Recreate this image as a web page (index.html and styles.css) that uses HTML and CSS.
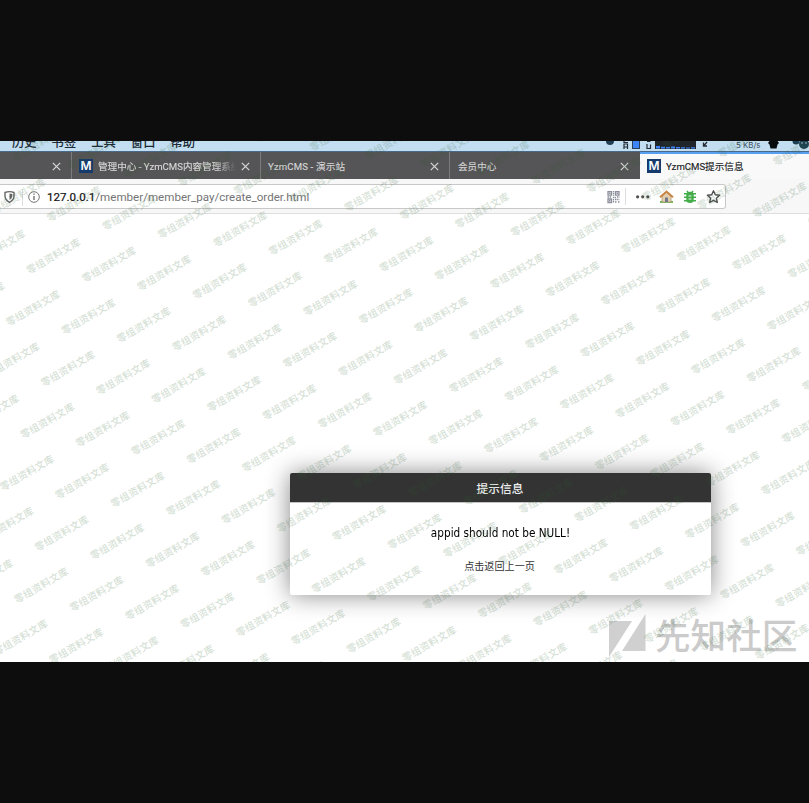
FILE: index.html
```html
<!DOCTYPE html>
<html lang="zh">
<head>
<meta charset="utf-8">
<title>YzmCMS提示信息</title>
<link rel="stylesheet" href="styles.css">
</head>
<body>
<main class="screen">
  <div class="menubar">
    <nav class="menus"><span>历史</span><span>书签</span><span>工具</span><span>窗口</span><span>帮助</span></nav>
    <svg class="tray" width="209" height="10" viewBox="600 141 209 10">
      <circle cx="610" cy="141" r="4" fill="#203f55"/>
      <path d="M624 141v1.500h4M624 149v-5h3.500v5M624 147h3.500" fill="none" stroke="#222b33" stroke-width="1.200"/>
      <rect x="632.500" y="139" width="7" height="9.500" fill="#3d84f7" stroke="#29405c"/>
      <path d="M647 141.500h3.500M647 144v4.500h3.500v-4" fill="none" stroke="#222b33" stroke-width="1.200"/>
      <rect x="655" y="139" width="41" height="10" fill="#20252a"/>
      <path d="M656 146h4v2.500h-4zM661 146.800h4v1.700h-4zM666 147h4v1.500h-4zM671 146.500h4v2h-4zM676 147h4v1.500h-4zM681 147.300h4v1.200h-4zM686 147.500h4v1h-4zM691 147.300h4v1.200h-4z" fill="#3d84f7"/>
      <path d="M707 142l-3 3.500M703.500 142.500v3.500h3.500" fill="none" stroke="#222b33" stroke-width="1.300"/>
      <path d="M769.500 141h8l1.500 2-1.500 1.500-1 4h-6l-1-4-1.500-1.500z" fill="#080b0e"/>
      <circle cx="796" cy="141" r="3.500" fill="#1d4154"/><circle cx="804" cy="144" r="5" fill="#1d4154"/>
      <circle cx="802" cy="143" r=".8" fill="#b7d2e2"/><circle cx="806" cy="143" r=".8" fill="#b7d2e2"/>
    </svg>
    <span class="speed">5 KB/s</span>
  </div>
  <div class="tabs">
    <div class="tab first"><svg class="close" viewBox="0 0 9 9"><path d="M.8.8l7.400 7.400M8.200.8L.8 8.200"/></svg></div>
    <div class="tab second"><span class="fav">M</span><span class="label fade">管理中心 - YzmCMS内容管理系统</span><svg class="close" viewBox="0 0 9 9"><path d="M.8.8l7.400 7.400M8.200.8L.8 8.200"/></svg></div>
    <div class="tab third"><span class="label">YzmCMS - 演示站</span><svg class="close" viewBox="0 0 9 9"><path d="M.8.8l7.400 7.400M8.200.8L.8 8.200"/></svg></div>
    <div class="tab fourth"><span class="label">会员中心</span><svg class="close" viewBox="0 0 9 9"><path d="M.8.8l7.400 7.400M8.200.8L.8 8.200"/></svg></div>
    <div class="tab active"><span class="fav">M</span><span class="label">YzmCMS提示信息</span></div>
  </div>
  <div class="toolbar">
    <div class="urlbar">
      <svg class="lead" width="42" height="22" viewBox="0 186 42 22" fill="none">
        <path d="M5 192.500q4.500-1.800 9 0v3.500q0 4-4.500 6.300Q5 200 5 196z" stroke="#666" stroke-width="1.400"/>
        <path d="M9.500 193.500v6.500q2.800-1.500 2.800-4.300v-1.700z" fill="#666"/>
        <path d="M22.500 189v17" stroke="#ddd"/>
        <circle cx="34" cy="197" r="5.300" stroke="#777"/>
        <path d="M34 196v4M34 193.500v1.200" stroke="#666" stroke-width="1.300"/>
      </svg>
      <span class="url"><b>127.0.0.1</b>/member/member_pay/create_order.html</span>
      <svg class="actions" width="120" height="22" viewBox="602 186 120 22" fill="none">
        <g stroke="#8b8f9b" stroke-width="1.300">
          <path d="M608 191.600h3.500v3.500H608zM615.500 191.600h3.500v3.500h-3.500zM608 199h3.500v3.500H608z"/>
          <path d="M613.500 191v5M607.500 197h4M613 197.500h3M617 197h2.500M613.500 199v3.500M615 199.500h4.500M615 202h1.500M618 202h1.500" stroke-dasharray="1.500 .6"/>
        </g>
        <path d="M609 192.600h1.500v1.500H609zM616.500 192.600h1.500v1.500h-1.500zM609 200h1.500v1.500H609z" fill="#8b8f9b"/>
        <path d="M625.500 188v17" stroke="#ddd"/>
        <g fill="#505050"><circle cx="637.600" cy="196.800" r="1.600"/><circle cx="642.700" cy="196.800" r="1.600"/><circle cx="647.800" cy="196.800" r="1.600"/></g>
        <path d="M660 201h13v1.800h-13z" fill="#62b445"/>
        <path d="M662 196.500l4.500-4 4.500 4v5.500h-9z" fill="#e2cfb0" stroke="#a88967" stroke-width=".7"/>
        <path d="M660 197.300l6.500-5.800 6.500 5.800" stroke="#c98543" stroke-width="2"/>
        <path d="M665 197.500h3v4.500h-3z" fill="#747989"/>
        <g stroke="#43ad49" stroke-width="1.500"><path d="M684 193.800h12M684 197.300h12M684 200.800h12M687 191l1.500 2M693 191l-1.500 2"/></g>
        <path d="M686.300 195q0-3.300 3.700-3.300t3.700 3.300v4.500q0 3.500-3.700 3.500t-3.700-3.500z" fill="#43ad49"/>
        <path d="M688.500 196h3M688.500 199h3" stroke="#e7f5e7" stroke-width="1.100"/>
        <path d="M713.500 190.800l1.800 4 4.300.5-3.200 2.900.9 4.300-3.800-2.200-3.800 2.200.9-4.300-3.200-2.900 4.300-.5z" stroke="#505050" stroke-width="1.400" stroke-linejoin="round"/>
      </svg>
    </div>
  </div>
  <div class="page">
    <section class="dialog">
      <h1>提示信息</h1>
      <p class="message">appid should not be NULL!</p>
      <p class="back">点击返回上一页</p>
    </section>
  </div>
  <div class="brand">
    <svg width="38" height="44" viewBox="0 0 38 44"><path d="M0 7h23L0 43zM36.500 0v37H13z" fill="#d0d0d0"/></svg>
    <span>先知社区</span>
  </div>
  <svg class="watermarks" id="watermarks" width="809" height="521" viewBox="0 141 809 521"></svg>
</main>
<script src="watermarks.js"></script>
</body>
</html>
```
FILE: styles.css
```css
* { box-sizing: border-box; }
body {
  margin: 0;
  height: 803px;
  padding-top: 141px;
  overflow: hidden;
  background: #0d0d0d;
  font-family: Roboto, "Noto Sans CJK SC", sans-serif;
}
.screen {
  position: relative;
  width: 809px;
  height: 521px;
  overflow: hidden;
  background: #fff;
}
.menubar {
  position: relative;
  display: flex;
  justify-content: space-between;
  height: 11px;
  overflow: hidden;
  background: #c3def0;
  border-bottom: 1px solid #49698a;
}
.menus {
  display: flex;
  gap: 15px;
  margin: -7px 0 0 12px;
  font: 500 12.3px/17px "Noto Sans CJK SC", sans-serif;
  color: #1c2a35;
}
.tray { flex: none; }
.speed {
  position: absolute;
  left: 736px;
  top: 0;
  font: 7.9px/9px Inter, sans-serif;
  color: #3c4e5c;
}
.tabs { display: flex; height: 27px; background: #555456; }
.tab {
  display: flex;
  align-items: center;
  padding: 1px 10px 0 8px;
  border-right: 1px solid #7b7a7c;
  font-size: 9.6px;
  color: #d6d6d6;
}
.tab .label { -webkit-text-stroke: .15px currentColor; }
.first { width: 72px; }
.second { width: 189px; padding-left: 7px; }
.third { width: 189px; padding-left: 7px; }
.third .label { letter-spacing: .16px; }
.fourth { width: 190px; border-right: 0; padding-right: 11px; }
.active {
  width: 169px;
  padding: 0 0 1px 7px;
  border-top: 2px solid #57a0f1;
  border-right: 0;
  background: #f9f9fa;
  color: #202124;
}
.label { white-space: nowrap; }
.fade {
  width: 138px;
  overflow: hidden;
  -webkit-mask-image: linear-gradient(to right, #000 118px, transparent 138px);
  mask-image: linear-gradient(to right, #000 118px, transparent 138px);
}
.fav {
  flex: none;
  width: 14px;
  height: 14px;
  margin-right: 5px;
  background: #173a6d;
  color: #fff;
  font: 600 12px/14px Inter, sans-serif;
  text-align: center;
}
.close {
  width: 9px;
  height: 9px;
  margin-left: auto;
  stroke: #d8d8d8;
  stroke-width: 1.2;
  fill: none;
}
.toolbar {
  height: 35px;
  padding-top: 5px;
  border-bottom: 1px solid #dedede;
  background: #f7f7f8;
}
.urlbar {
  display: flex;
  align-items: center;
  width: 726px;
  height: 25px;
  border: 1px solid #c8c8c8;
  border-left: 0;
  border-radius: 0 3px 3px 0;
  background: #fff;
}
.lead, .actions { flex: none; }
.url {
  margin-left: 5px;
  font-size: 11.6px;
  line-height: 22px;
  color: #747474;
}
.url b { font-weight: 400; color: #111; -webkit-text-stroke: .2px #111; }
.actions { margin-left: auto; margin-right: 3px; }
.page { height: 448px; padding: 258.5px 0 0 289.5px; }
.dialog {
  width: 421px;
  height: 122px;
  border-radius: 2px;
  overflow: hidden;
  background: #fff;
  box-shadow: 0 0 25px rgba(0, 0, 0, .48);
  text-align: center;
}
.dialog h1 {
  margin: 0;
  height: 30px;
  background: #333;
  border-bottom: 1px solid #c4c4c4;
  color: #eee;
  font: 500 11.7px/30px "Noto Sans CJK SC", sans-serif;
}
.message {
  margin: 21px 0 0;
  font: 12px/18px "DejaVu Sans", sans-serif;
  transform: scaleX(.875);
  color: #000;
}
.back {
  margin: 16px 0 0;
  padding-right: 1px;
  font: 10.1px/16px "Noto Sans CJK SC", sans-serif;
  color: #333;
}
.brand {
  position: absolute;
  left: 609px;
  top: 473px;
  display: flex;
  align-items: flex-start;
  color: #cbcbcb;
}
.brand span {
  margin: -2px 0 0 8px;
  font: 500 35.6px/44px "Noto Sans CJK SC", sans-serif;
  white-space: nowrap;
}
.watermarks {
  position: absolute;
  left: 0;
  top: 0;
  font: 700 10px "Noto Sans CJK SC", sans-serif;
  letter-spacing: .1px;
  fill: rgba(45, 95, 50, .19);
  pointer-events: none;
}
```
FILE: watermarks.js
```js
// Repeats the slanted mark along two lattice directions.
const layer = document.getElementById('watermarks');
for (let row = -4; row <= 9; row++) {
  for (let col = -5; col <= 19; col++) {
    const x = 53.4 + col * 55.4 - row * 20.5;
    const y = 256 + col * 8.35 + row * 52.1;
    if (x < -35 || x > 845 || y < 115 || y > 690) continue;
    const mark = document.createElementNS('http://www.w3.org/2000/svg', 'text');
    mark.setAttribute('transform', `translate(${x} ${y}) rotate(-30)`);
    mark.setAttribute('text-anchor', 'middle');
    mark.setAttribute('y', '3.8');
    mark.textContent = '零组资料文库';
    layer.appendChild(mark);
  }
}
```
